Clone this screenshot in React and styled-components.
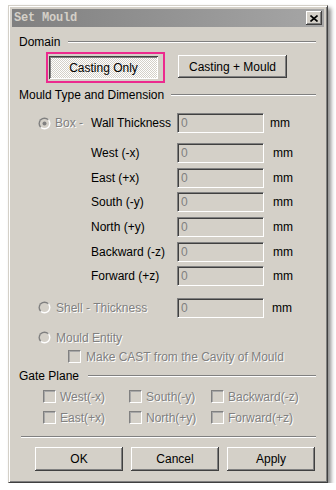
import React from "react";
import styled, { createGlobalStyle } from "styled-components";

const Global = createGlobalStyle`
  html, body { margin: 0; padding: 0; background: #ffffff; }
  body { font-family: "Liberation Sans", Arial, sans-serif; font-size: 12px; }
`;

const Window = styled.div`
  margin: 5px 0 0 8px;
  width: 320px;
  height: 478px;
  box-sizing: border-box;
  background: #d4d0c8;
  border: 1px solid;
  border-color: #d4d0c8 #404040 #404040 #d4d0c8;
  box-shadow: inset 1px 1px #ffffff, inset -1px -1px #808080,
    3px 3px 4px rgba(0, 0, 0, 0.45);
  padding: 3px;
  display: flex;
  flex-direction: column;
`;

const TitleBar = styled.div`
  height: 18px;
  background: linear-gradient(to right, #808080, #a6a6a6);
  display: flex;
  align-items: center;
  justify-content: space-between;
  padding: 0 2px 0 2px;
`;

const Title = styled.span`
  font-family: "Liberation Mono", "DejaVu Sans Mono", monospace;
  font-weight: bold;
  font-size: 12px;
  letter-spacing: -0.2px;
  color: #d4d0c8;
`;

const CloseBtn = styled.div`
  width: 16px;
  height: 14px;
  box-sizing: border-box;
  background: #d4d0c8;
  box-shadow: inset -1px -1px #404040, inset 1px 1px #ffffff,
    inset -2px -2px #808080;
  display: flex;
  align-items: center;
  justify-content: center;
`;

const Body = styled.div`
  padding: 0 8px 0 7px;
  display: flex;
  flex-direction: column;
`;

const GroupHeader = styled.div`
  display: flex;
  align-items: center;
  gap: ${(p) => p.$gap || 7}px;
  height: 14px;
  margin-top: ${(p) => p.$mt}px;
  color: #000;
`;

const Etched = styled.div`
  flex: 1;
  height: 0;
  border-top: 1px solid #808080;
  border-bottom: 1px solid #ffffff;
`;

const DomainRow = styled.div`
  display: flex;
  align-items: flex-start;
  margin-top: 3px;
  padding-left: 27px;
`;

const Highlight = styled.div`
  border: 2px solid #ec2a8e;
  padding: 2px 5px 2px 1px;
`;

const Button = styled.div`
  width: ${(p) => p.$w || 109}px;
  height: ${(p) => p.$h || 23}px;
  box-sizing: border-box;
  display: flex;
  align-items: center;
  justify-content: center;
  color: #000;
  background: #d4d0c8;
  box-shadow: inset -1px -1px #404040, inset 1px 1px #ffffff,
    inset -2px -2px #808080;
  margin-top: ${(p) => p.$mt || 0}px;
  margin-left: ${(p) => p.$ml || 0}px;
`;

const PressedButton = styled(Button)`
  background-color: #ffffff;
  background-image: conic-gradient(#d4d0c8 25%, #ffffff 0 50%, #d4d0c8 0 75%, #ffffff 0);
  background-size: 2px 2px;
  box-shadow: inset 1px 1px #404040, inset -1px -1px #ffffff,
    inset 2px 2px #808080;
  padding-top: 1px;
`;

const DimGrid = styled.div`
  display: grid;
  grid-template-columns: 53px 86px 87px auto;
  row-gap: ${(p) => p.$gap || 0}px;
  margin-top: ${(p) => p.$mt}px;
  padding-left: 19px;
  align-items: center;
`;

const Choice = styled.div`
  display: flex;
  align-items: center;
  gap: ${(p) => p.$gap || 4}px;
  grid-column: ${(p) => p.$span || "auto"};
  height: ${(p) => p.$h || 20}px;
  margin-top: ${(p) => p.$mt || 0}px;
  margin-left: ${(p) => p.$ml || 0}px;
`;

const Disabled = styled.span`
  color: #808080;
  text-shadow: 1px 1px #ffffff;
  white-space: nowrap;
`;

const Label = styled.span`
  color: #000;
  white-space: nowrap;
  grid-column: ${(p) => p.$col || "auto"};
`;

const Field = styled.div`
  width: 87px;
  height: 20px;
  box-sizing: border-box;
  background: #d4d0c8;
  border: 1px solid;
  border-color: #808080 #ffffff #ffffff #808080;
  box-shadow: inset 1px 1px #404040, inset -1px -1px #d4d0c8;
  color: #808080;
  padding: 2px 0 0 3px;
  line-height: 14px;
`;

const Unit = styled.span`
  color: #000;
  padding-left: ${(p) => p.$pl}px;
`;

const CheckRow = styled.div`
  display: grid;
  grid-template-columns: 86px 82px auto;
  padding-left: 24px;
  height: 14px;
  align-items: center;
  margin-top: 7px;
`;

const CheckItem = styled.div`
  display: flex;
  align-items: center;
  gap: 4px;
  height: 14px;
`;

const Box = styled.span`
  width: 13px;
  height: 13px;
  box-sizing: border-box;
  border: 1px solid;
  border-color: #808080 #ffffff #ffffff #808080;
  box-shadow: inset 1px 1px #a8a8a8;
  background: #d4d0c8;
  flex: none;
`;

const Separator = styled.div`
  margin: 11px 0 0 2px;
  height: 0;
  border-top: 1px solid #808080;
  border-bottom: 1px solid #ffffff;
`;

const Footer = styled.div`
  display: flex;
  justify-content: flex-end;
  gap: 8px;
  margin-top: 9px;
  padding-right: 1px;
`;

const Radio = ({ checked }) => (
  <svg width="13" height="13" viewBox="0 0 13 13" style={{ flex: "none" }}>
    <defs>
      <linearGradient id={checked ? "rg1" : "rg0"} x1="0" y1="0" x2="1" y2="1">
        <stop offset="0.45" stopColor="#808080" />
        <stop offset="0.55" stopColor="#ffffff" />
      </linearGradient>
    </defs>
    <circle cx="6.5" cy="6.5" r="6" fill={`url(#${checked ? "rg1" : "rg0"})`} />
    <circle cx="6.5" cy="6.5" r="4.6" fill="#d4d0c8" />
    {checked && <circle cx="6.5" cy="6.5" r="2" fill="#808080" />}
  </svg>
);

const dims = ["West (-x)", "East (+x)", "South (-y)", "North (+y)", "Backward (-z)", "Forward (+z)"];

export default function App() {
  return (
    <>
      <Global />
      <Window>
        <TitleBar>
          <Title>Set Mould</Title>
          <CloseBtn>
            <svg width="8" height="7" viewBox="0 0 8 7">
              <path d="M0.5 0.5 L7.5 6.5 M7.5 0.5 L0.5 6.5" stroke="#000" strokeWidth="1.6" />
            </svg>
          </CloseBtn>
        </TitleBar>
        <Body>
          <GroupHeader $mt={8} $gap={8}>
            <span>Domain</span>
            <Etched />
          </GroupHeader>
          <DomainRow>
            <Highlight>
              <PressedButton>Casting Only</PressedButton>
            </Highlight>
            <Button $mt={3} $ml={13}>Casting + Mould</Button>
          </DomainRow>

          <GroupHeader $mt={5}>
            <span>Mould Type and Dimension</span>
            <Etched />
          </GroupHeader>

          <DimGrid $mt={11}>
            <Choice>
              <Radio checked />
              <Disabled>Box -</Disabled>
            </Choice>
            <Label>Wall Thickness</Label>
            <Field>0</Field>
            <Unit $pl={6}>mm</Unit>
          </DimGrid>

          <DimGrid $mt={10} $gap={4.67}>
            {dims.map((d) => (
              <React.Fragment key={d}>
                <Label $col="2">{d}</Label>
                <Field>0</Field>
                <Unit $pl={9}>mm</Unit>
              </React.Fragment>
            ))}
          </DimGrid>

          <DimGrid $mt={11.7}>
            <Choice $span="1 / span 2" $gap={5}>
              <Radio />
              <Disabled>Shell - Thickness</Disabled>
            </Choice>
            <Field>0</Field>
            <Unit $pl={8}>mm</Unit>
          </DimGrid>

          <Choice $h={14} $mt={13} $ml={19} $gap={5}>
            <Radio />
            <Disabled>Mould Entity</Disabled>
          </Choice>

          <Choice $h={14} $mt={5} $ml={49} $gap={5}>
            <Box />
            <Disabled>Make CAST from the Cavity of Mould</Disabled>
          </Choice>

          <GroupHeader $mt={5} $gap={9}>
            <span>Gate Plane</span>
            <Etched />
          </GroupHeader>

          <CheckRow>
            <CheckItem><Box /><Disabled>West(-x)</Disabled></CheckItem>
            <CheckItem><Box /><Disabled>South(-y)</Disabled></CheckItem>
            <CheckItem><Box /><Disabled>Backward(-z)</Disabled></CheckItem>
          </CheckRow>
          <CheckRow>
            <CheckItem><Box /><Disabled>East(+x)</Disabled></CheckItem>
            <CheckItem><Box /><Disabled>North(+y)</Disabled></CheckItem>
            <CheckItem><Box /><Disabled>Forward(+z)</Disabled></CheckItem>
          </CheckRow>

          <Separator />

          <Footer>
            <Button $w={88} $h={24}>OK</Button>
            <Button $w={88} $h={24}>Cancel</Button>
            <Button $w={88} $h={24}>Apply</Button>
          </Footer>
        </Body>
      </Window>
    </>
  );
}
